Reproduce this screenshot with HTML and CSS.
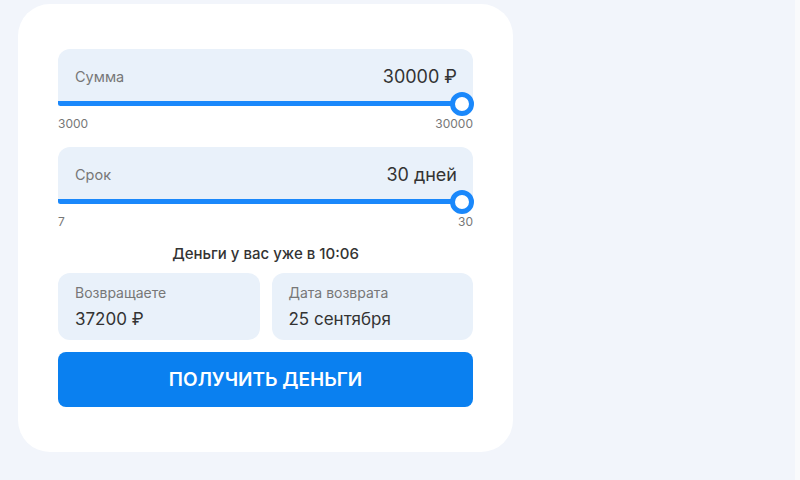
FILE: index.html
```html
<!DOCTYPE html>
<html lang="ru">
<head>
<meta charset="utf-8">
<link rel="stylesheet" href="styles.css">
</head>
<body>
<div class="page">
  <main class="area">
    <section class="card">
      <div class="slider">
        <div class="field">
          <span class="field-label">Сумма</span>
          <span class="field-value">30000 ₽</span>
        </div>
        <div class="track"><span class="thumb"></span></div>
        <div class="range"><span>3000</span><span>30000</span></div>
      </div>
      <div class="slider second">
        <div class="field">
          <span class="field-label">Срок</span>
          <span class="field-value">30 дней</span>
        </div>
        <div class="track"><span class="thumb"></span></div>
        <div class="range"><span>7</span><span>30</span></div>
      </div>
      <p class="eta">Деньги у вас уже в 10:06</p>
      <div class="info">
        <div class="info-box">
          <span class="info-label">Возвращаете</span>
          <span class="info-value">37200 ₽</span>
        </div>
        <div class="info-box">
          <span class="info-label">Дата возврата</span>
          <span class="info-value">25 сентября</span>
        </div>
      </div>
      <button class="cta">ПОЛУЧИТЬ ДЕНЬГИ</button>
    </section>
  </main>
  <div class="scrollbar"></div>
</div>
</body>
</html>
```
FILE: styles.css
```css
* { box-sizing: border-box; }
html, body { margin: 0; padding: 0; }
body {
  font-family: Inter, "Noto Sans", "Liberation Sans", sans-serif;
  background: #f2f5fb;
  color: #333;
}
.page {
  display: flex;
  width: 800px;
  height: 480px;
  overflow: hidden;
}
.area {
  flex: 1;
  padding: 4px 0 0 18px;
}
.scrollbar {
  width: 5px;
  background: #f9fafc;
}
.card {
  width: 495px;
  height: 448px;
  background: #fff;
  border-radius: 32px;
  padding: 45px 40px 0 40px;
}
.slider { position: relative; }
.slider.second { margin-top: 16px; }
.field {
  height: 52px;
  background: #e9f1fa;
  border-radius: 12px 12px 0 0;
  display: flex;
  align-items: center;
  justify-content: space-between;
  padding: 2px 16px 0 17px;
}
.field-label {
  font-size: 14.5px;
  color: #777;
}
.field-value {
  font-size: 18px;
  font-weight: 400;
  color: #333;
}
.track {
  position: relative;
  height: 5px;
  background: #1a88fb;
  border-radius: 0 3px 3px 3px;
  margin-right: 11px;
}
.thumb {
  position: absolute;
  right: -12px;
  top: -9.5px;
  width: 24px;
  height: 24px;
  border-radius: 50%;
  background: #fff;
  border: 5.5px solid #1a88fb;
}
.range {
  display: flex;
  justify-content: space-between;
  margin-top: 11px;
  font-size: 12px;
  line-height: 14px;
  color: #777;
}
.eta {
  margin: 16px 0 0;
  text-align: center;
  font-size: 15px;
  font-weight: 500;
  line-height: 18px;
  color: #333;
}
.info {
  display: grid;
  grid-template-columns: 1fr 1fr;
  gap: 12px;
  margin-top: 10px;
}
.info-box {
  height: 67px;
  background: #e9f1fa;
  border-radius: 12px;
  padding: 11px 16px 0 17px;
  display: flex;
  flex-direction: column;
  gap: 6px;
}
.info-label {
  font-size: 14px;
  line-height: 18px;
  color: #777;
}
.info-value {
  font-size: 17px;
  line-height: 22px;
  color: #333;
}
.cta {
  display: block;
  width: 100%;
  height: 55px;
  margin-top: 12px;
  border: none;
  border-radius: 8px;
  background: #0a80f0;
  color: #fff;
  font-family: inherit;
  font-size: 19px;
  font-weight: 600;
}
```
